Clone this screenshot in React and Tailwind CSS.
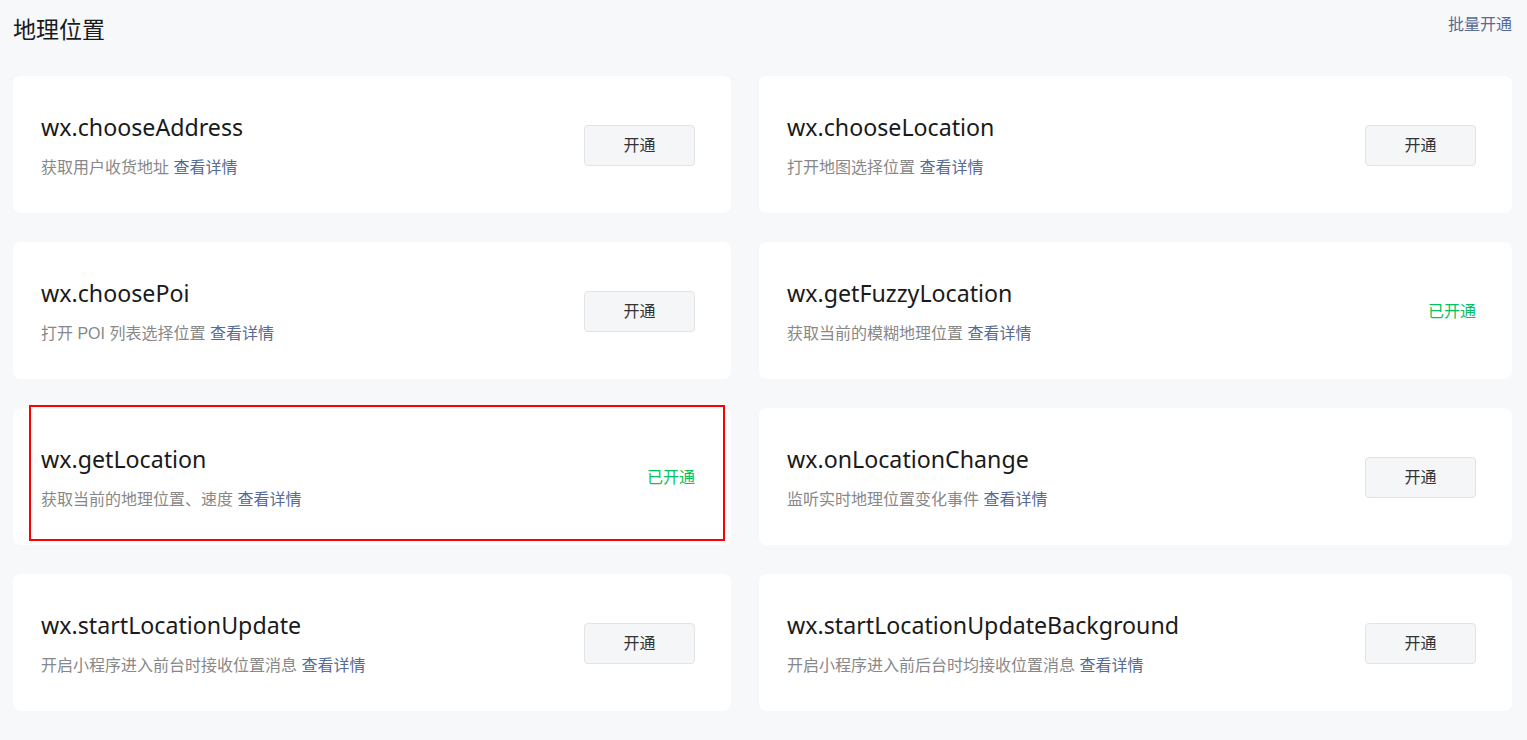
import React from 'react';

const ITEMS = [
    { name: 'wx.chooseAddress', desc: '获取用户收货地址', on: false },
    { name: 'wx.chooseLocation', desc: '打开地图选择位置', on: false },
    { name: 'wx.choosePoi', desc: '打开 POI 列表选择位置', on: false },
    { name: 'wx.getFuzzyLocation', desc: '获取当前的模糊地理位置', on: true },
    { name: 'wx.getLocation', desc: '获取当前的地理位置、速度', on: true, marked: true },
    { name: 'wx.onLocationChange', desc: '监听实时地理位置变化事件', on: false },
    { name: 'wx.startLocationUpdate', desc: '开启小程序进入前台时接收位置消息', on: false },
    { name: 'wx.startLocationUpdateBackground', desc: '开启小程序进入前后台时均接收位置消息', on: false },
];

const ApiCard = ({ name, desc, on, marked }) => {
    return (
        <div className="relative h-[137px] bg-white rounded-lg flex items-center justify-between pl-[28px] pr-[36px] pt-[2px]">
            <div>
                <p
                    className="text-[23.2px] leading-[30px] text-[#1a1a1a]"
                    style={{ fontFamily: '"Noto Sans", "Noto Sans CJK SC", sans-serif' }}
                >
                    {name}
                </p>
                <p className="mt-[15px] text-[16px] leading-[22px] text-[#888888]">
                    {desc} <span className="text-[#576b95] cursor-pointer">查看详情</span>
                </p>
            </div>
            {on ? (
                <span className="text-[16px] leading-[22px] text-[#07c160]">已开通</span>
            ) : (
                <button className="w-[111px] h-[41px] rounded border border-[#e2e3e5] bg-[#f5f6f7] text-[16px] text-[#333333]">
                    开通
                </button>
            )}
            {/* annotation box drawn over the card */}
            {marked && (
                <div className="absolute left-[16px] top-[-3px] w-[696px] h-[136px] border-2 border-[#ff0000] pointer-events-none"></div>
            )}
        </div>
    );
};

export default function App() {
    return (
        <div
            className="min-h-[740px] bg-[#f7f8fa] pl-[13px] pr-[15px]"
            style={{ fontFamily: '"Liberation Sans", "Noto Sans CJK SC", sans-serif' }}
        >
            <div className="h-[76px] flex justify-between items-start">
                <h1 className="pt-[15px] text-[23px] leading-[30px] text-[#1a1a1a]">地理位置</h1>
                <a className="pt-[14px] text-[16px] leading-[22px] text-[#576b95] cursor-pointer">批量开通</a>
            </div>
            <div className="grid grid-cols-[718px_753px] gap-x-[28px] gap-y-[29px]">
                {ITEMS.map((item) => (
                    <ApiCard key={item.name} {...item} />
                ))}
            </div>
        </div>
    );
}
